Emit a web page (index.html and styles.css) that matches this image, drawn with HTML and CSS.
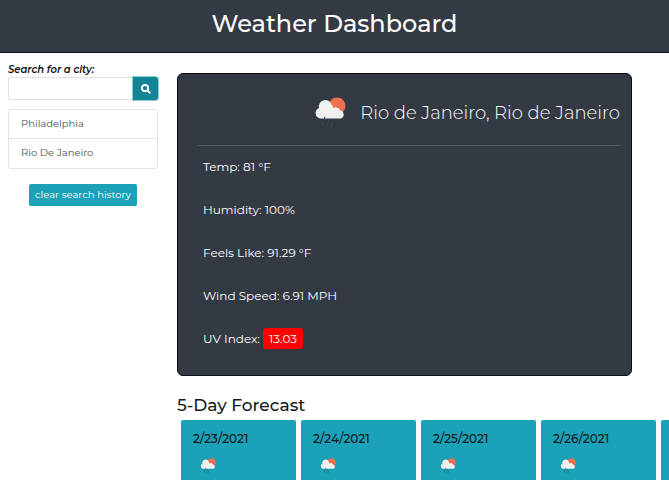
FILE: index.html
```html
<!DOCTYPE html>
<html lang="en">
<head>
<meta charset="utf-8">
<title>Weather Dashboard</title>
<link rel="stylesheet" href="styles.css">
</head>
<body>
<svg class="sprite" aria-hidden="true">
  <symbol id="shower" viewBox="0 0 32 32">
    <circle cx="23" cy="9" r="8.500" fill="#ee714f"/>
    <path d="M6 21.500a5.500 5.500 0 0 1-1-10.500 A6.500 6.500 0 0 1 17.500 7.500 A5 5 0 0 1 19 11 A5.500 5.500 0 0 1 26.500 13.500 A4.200 4.200 0 0 1 27 21.500Z" fill="#f1f1f2"/>
    <path class="rain" d="M11 20l-1 3M15 23l-1 2M9 26l-1 2M13 28l-1 2M18 26l-1 3"/>
  </symbol>
</svg>
<header class="banner"><h1>Weather Dashboard</h1></header>
<div class="layout">
  <aside class="sidebar">
    <form class="search">
      <label for="city">Search for a city:</label>
      <div class="search-group">
        <input id="city" type="text">
        <button type="button" class="search-button" aria-label="Search">
          <svg viewBox="0 0 16 16" aria-hidden="true"><circle cx="6.500" cy="6.500" r="5"/><path d="M10 10l5 5"/></svg>
        </button>
      </div>
    </form>
    <ul class="history">
      <li>Philadelphia</li>
      <li>Rio De Janeiro</li>
    </ul>
    <button type="button" class="clear">clear search history</button>
  </aside>
  <main class="content">
    <section class="current">
      <div class="place">
        <svg class="weather-large" aria-hidden="true"><use href="#shower"/></svg>
        <h2>Rio de Janeiro, Rio de Janeiro</h2>
      </div>
      <ul class="readings">
        <li>Temp: 81 °F</li>
        <li>Humidity: 100%</li>
        <li>Feels Like: 91.29 °F</li>
        <li>Wind Speed: 6.91 MPH</li>
        <li>UV Index: <span class="uv">13.03</span></li>
      </ul>
    </section>
    <h2 class="forecast-title">5-Day Forecast</h2>
    <div class="forecast">
      <article class="day"><h3>2/23/2021</h3><svg aria-hidden="true"><use href="#shower"/></svg></article>
      <article class="day"><h3>2/24/2021</h3><svg aria-hidden="true"><use href="#shower"/></svg></article>
      <article class="day"><h3>2/25/2021</h3><svg aria-hidden="true"><use href="#shower"/></svg></article>
      <article class="day"><h3>2/26/2021</h3><svg aria-hidden="true"><use href="#shower"/></svg></article>
      <article class="day"></article>
    </div>
  </main>
</div>
</body>
</html>
```
FILE: styles.css
```css
* { box-sizing: border-box; }
html { overflow: hidden; }
body {
  margin: 0;
  background: #fff;
  color: #16191d;
  font-family: Montserrat, Inter, sans-serif;
  font-size: 12px;
  line-height: 18px;
}
h1, h2, h3, ul { margin: 0; padding: 0; font-weight: 500; }
ul { list-style: none; }
button, input { font: inherit; }
.sprite { position: absolute; width: 0; height: 0; }
.rain { fill: none; stroke: #454a55; stroke-width: 1; stroke-linecap: round; }

.banner {
  padding: 8px 0 12px;
  border-bottom: 1px solid #101420;
  background: #343a43;
  color: #fff;
  text-align: center;
}
.banner h1 { font-size: 24px; line-height: 32px; }

.layout { display: flex; gap: 19px; padding: 0 37px 0 8px; }
.sidebar { flex: 0 0 150px; min-width: 0; padding-top: 9px; }
.search label {
  display: block;
  color: #111;
  font-size: 10px;
  font-style: italic;
  font-weight: 600;
  line-height: 15px;
}
.search-group { display: flex; height: 23px; }
.search input {
  flex: 1;
  min-width: 0;
  border: 1px solid #dee1e4;
  border-right: 0;
  border-radius: 3px 0 0 3px;
  background: #fff;
}
.search-button {
  display: grid;
  place-items: center;
  flex: 0 0 25px;
  padding: 0;
  border: 0;
  border-radius: 0 3px 3px 0;
  background: #138496;
  box-shadow: 0 0 0 1px #8dcdd8;
}
.search-button svg {
  width: 10px;
  height: 10px;
  fill: none;
  stroke: #fff;
  stroke-width: 3;
}
.history {
  margin-top: 9px;
  border: 1px solid #e2e3e4;
  border-radius: 3px;
  color: #495057;
  font-size: 10px;
  font-weight: 400;
}
.history li { padding: 5px 12px; }
.history li + li { border-top: 1px solid #e2e3e4; padding-bottom: 6px; }
.clear {
  display: block;
  margin: 15px auto 0;
  padding: 2px 6px;
  border: 0;
  border-radius: 2px;
  background: #1ba1b8;
  color: #fff;
  font-size: 10px;
  font-weight: 400;
}

.content { flex: 1; min-width: 0; padding-top: 20px; }
.current {
  padding: 11px 11px 15px 20px;
  border: 1px solid #0b0e15;
  border-radius: 6px;
  background: #343a43;
  color: #fff;
}
.place {
  display: flex;
  align-items: center;
  justify-content: flex-end;
  gap: 14px;
  padding-bottom: 4px;
  border-bottom: 1px solid #55595a;
}
.place h2 { font-size: 18px; font-weight: 300; line-height: 56px; }
.weather-large { width: 32px; height: 32px; }
.readings { margin-left: -5px; font-weight: 400; }
.readings li {
  padding: 9px 10px;
  border-bottom: 1px solid #31373f;
  line-height: 24px;
}
.readings li:last-child { border-bottom: 0; }
.uv {
  display: inline-block;
  padding: 0 6px;
  border-radius: 3px;
  background: #f00;
  line-height: 21px;
}
.forecast-title { margin-top: 17px; font-size: 17px; line-height: 24px; }
.forecast { display: flex; gap: 5px; margin: 3px 0 0 4px; }
.day {
  flex: 0 0 115px;
  min-height: 140px;
  padding: 10px 12px;
  border-radius: 2px;
  background: #1ba1b8;
}
.day h3 { font-size: 12px; }
.day svg { display: block; width: 16px; height: 16px; margin: 10px 0 0 7px; }
```
